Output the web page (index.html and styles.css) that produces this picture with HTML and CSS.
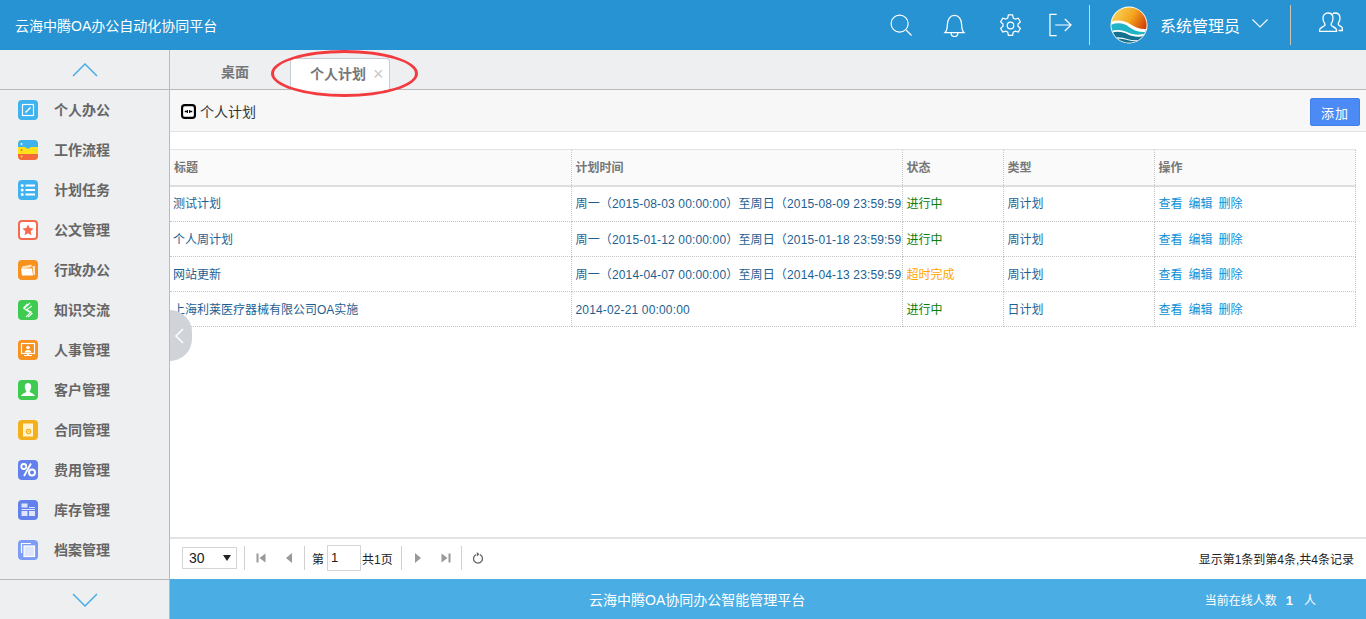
FILE: index.html
```html
<!DOCTYPE html>
<html>
    <head>
        <meta charset="utf-8">
        <link rel="stylesheet" href="styles.css">
    </head>
    <body>
        <header class="top-bar">
            <div class="brand">云海中腾OA办公自动化协同平台</div>
            <div class="top-tools">
                <svg class="tool tool-search" viewBox="0 0 24 24"><circle cx="10.5" cy="10.5" r="9.3"/><path d="M17.5 17.5l6 6"/></svg>
                <svg class="tool tool-bell" viewBox="0 0 24 24"><path d="M2 19.5c2-2 2.5-3.5 2.5-8C4.5 5.500 7.500 1.500 12 1.500s7.500 4 7.500 10c0 4.500.5 6 2.500 8zM8.500 19.500c0 2.500 1.500 4 3.500 4s3.500-1.500 3.500-4"/></svg>
                <svg class="tool tool-gear" viewBox="0 0 24 24"><path d="M9.800 1h4.400l.7 3.300 2 1.100 3.200-1 2.200 3.800-2.500 2.300v2.200l2.500 2.300-2.200 3.800-3.200-1-2 1.100-.7 3.300H9.800l-.7-3.300-2-1.100-3.200 1-2.200-3.800 2.500-2.300v-2.200L1.700 8.200l2.200-3.800 3.200 1 2-1.100z"/><circle cx="12" cy="12" r="3.400"/></svg>
                <svg class="tool tool-exit" viewBox="0 0 24 24"><path d="M8 1H1v22h7M6.500 12h16.500M16.500 5.800L23 12l-6.500 6.200"/></svg>
                <span class="top-divider"></span>
                <svg class="logo" viewBox="0 0 40 40">
                    <defs>
                        <linearGradient id="sun" x1="0" y1="0" x2="1" y2="0.600">
                            <stop offset="0" stop-color="#f9e46e"/>
                            <stop offset="0.550" stop-color="#f4a41d"/>
                            <stop offset="1" stop-color="#cb2c05"/>
                        </linearGradient>
                        <clipPath id="disc"><circle cx="20" cy="20" r="18.500"/></clipPath>
                    </defs>
                    <circle cx="20" cy="20" r="19.500" fill="#fff"/>
                    <g clip-path="url(#disc)">
                        <rect width="40" height="40" fill="url(#sun)"/>
                        <path d="M0 17c8-3 15-2 21 2s12 6 19 5v16H0z" fill="#fff"/>
                        <path d="M0 20c8-3 15-2 20 2s12 6 20 5v13H0z" fill="#1fb4c6"/>
                        <path d="M0 27c7-3 13-2 19 1s14 3 21 0v12H0z" fill="#fff"/>
                        <path d="M0 29c7-3 13-2 19 1s14 3 21 0v10H0z" fill="#14708f"/>
                        <path d="M0 34c7-2 13-1 19 1s14 1 21-1v1c-7 2-14 3-21 1S7 34 0 35z" fill="#fff"/>
                    </g>
                </svg>
                <span class="user-name">系统管理员</span>
                <svg class="user-caret" viewBox="0 0 16 9"><path d="M.5.500L8 8 15.500.500"/></svg>
                <span class="top-divider top-divider-tan"></span>
                <svg class="tool tool-users" viewBox="0 0 24 20"><path d="M.5 19.500V18c0-2 2.500-3 4.500-4 1-.5 1.200-1.500.7-2.500C4.500 10 4 8 4 6.200 4 3 6 1 9 1s5 2 5 5.200c0 1.800-.5 3.800-1.700 5.300-.5 1-.3 2 .7 2.500 2 1 4.500 2 4.500 4v1.500z"/><path d="M13.500 1.800C14.500 1.200 15.300 1 16 1c3 0 5 2 5 5 0 1.800-.5 3.500-1.500 5-.5 1-.3 1.800.7 2.300 1.800.8 3.300 1.700 3.300 3.700v1.500h-4"/></svg>
            </div>
        </header>

        <div class="main">
            <aside class="sidebar">
                <div class="side-arrow side-arrow-up">
                    <svg viewBox="0 0 26 14"><path d="M1 13L13 1l12 12"/></svg>
                </div>
                <nav class="menu">
                    <div class="menu-item">
                        <svg class="menu-icon" viewBox="0 0 20 20"><rect width="20" height="20" rx="4" fill="#3fb2f0"/><rect x="4.500" y="4.500" width="11" height="11" fill="none" stroke="#fff" stroke-width="1.200"/><path d="M7.500 12.500l5-5" stroke="#fff" stroke-width="1.400"/></svg>
                        <span>个人办公</span>
                    </div>
                    <div class="menu-item">
                        <svg class="menu-icon" viewBox="0 0 20 20"><rect width="20" height="20" rx="4" fill="#ffe01a"/><path d="M0 7V4a4 4 0 0 1 4-4h12a4 4 0 0 1 4 4v3h-7l-3 2-3-2z" fill="#3fb2f0"/><path d="M0 14h20v2a4 4 0 0 1-4 4H4a4 4 0 0 1-4-4z" fill="#f5683d"/><circle cx="3.500" cy="4" r="1" fill="#fff"/><circle cx="3.500" cy="10" r="1" fill="#f5683d"/><circle cx="3.500" cy="16.500" r="1" fill="#ffe01a"/></svg>
                        <span>工作流程</span>
                    </div>
                    <div class="menu-item">
                        <svg class="menu-icon" viewBox="0 0 20 20"><rect width="20" height="20" rx="4" fill="#3fb2f0"/><path d="M7.500 5.500H17M7.500 10H17M7.500 14.500H17" stroke="#fff" stroke-width="1.800"/><circle cx="4.200" cy="5.500" r="1.500" fill="#fff"/><circle cx="4.200" cy="10" r="1.500" fill="#fff"/><circle cx="4.200" cy="14.500" r="1.500" fill="#fff"/></svg>
                        <span>计划任务</span>
                    </div>
                    <div class="menu-item">
                        <svg class="menu-icon" viewBox="0 0 20 20"><rect width="20" height="20" rx="4" fill="#f76b4d"/><rect x="2" y="2" width="16" height="16" rx="2" fill="#fff"/><path d="M10 4.500l1.700 3.600 3.900.5-2.900 2.700.8 3.900-3.500-2-3.500 2 .8-3.900-2.900-2.700 3.900-.5z" fill="#f76b4d"/></svg>
                        <span>公文管理</span>
                    </div>
                    <div class="menu-item">
                        <svg class="menu-icon" viewBox="0 0 20 20"><rect width="20" height="20" rx="4" fill="#f8911e"/><path d="M4 9V6.500l9.500-2V7z" fill="#ffe3b5"/><path d="M14.500 6H17v9h-1.500z" fill="#fff" opacity=".8"/><path d="M3 8.500h11l1 7H4z" fill="#fff"/></svg>
                        <span>行政办公</span>
                    </div>
                    <div class="menu-item">
                        <svg class="menu-icon" viewBox="0 0 20 20"><rect width="20" height="20" rx="4" fill="#3fcb51"/><path d="M12 3L6 8.500l7 3.500-5 5M9.500 4L5.500 8M14 6L8 10l6 3.500-4 3.500" fill="none" stroke="#fff" stroke-width="1.200" opacity=".9"/></svg>
                        <span>知识交流</span>
                    </div>
                    <div class="menu-item">
                        <svg class="menu-icon" viewBox="0 0 20 20"><rect width="20" height="20" rx="4" fill="#f8911e"/><rect x="3.500" y="3.500" width="13" height="10" fill="none" stroke="#fff" stroke-width="1.200"/><circle cx="10" cy="7.500" r="1.800" fill="#fff"/><path d="M6.500 12.500c.5-2 2-2.500 3.500-2.500s3 .5 3.500 2.500zM9 13.500h2V15h3v1H6v-1h3z" fill="#fff"/></svg>
                        <span>人事管理</span>
                    </div>
                    <div class="menu-item">
                        <svg class="menu-icon" viewBox="0 0 20 20"><rect width="20" height="20" rx="4" fill="#3fcb51"/><path d="M10 3c2 0 3.200 1.500 3.200 3.500S12 11 11.500 11.800c.5 1 4.500 1.700 5.500 4.200H3c1-2.500 5-3.200 5.500-4.200C8 11 6.800 8.500 6.800 6.500S8 3 10 3z" fill="#fff"/></svg>
                        <span>客户管理</span>
                    </div>
                    <div class="menu-item">
                        <svg class="menu-icon" viewBox="0 0 20 20"><rect width="20" height="20" rx="4" fill="#f4b01b"/><rect x="5" y="3.500" width="10" height="13" fill="#fff3d2"/><circle cx="10.500" cy="11.500" r="2.200" fill="none" stroke="#f4b01b" stroke-width="1.200"/><circle cx="10.500" cy="11.500" r=".8" fill="#f4b01b"/></svg>
                        <span>合同管理</span>
                    </div>
                    <div class="menu-item">
                        <svg class="menu-icon" viewBox="0 0 20 20"><rect width="20" height="20" rx="4" fill="#6281ec"/><circle cx="5.800" cy="6.500" r="2.500" fill="none" stroke="#fff" stroke-width="1.800"/><circle cx="14" cy="12.500" r="3" fill="none" stroke="#fff" stroke-width="2"/><path d="M13 3.500L6 16" stroke="#fff" stroke-width="1.800"/></svg>
                        <span>费用管理</span>
                    </div>
                    <div class="menu-item">
                        <svg class="menu-icon" viewBox="0 0 20 20"><rect width="20" height="20" rx="4" fill="#6281ec"/><rect x="3.500" y="3.500" width="6" height="4" fill="#dfe6fc"/><path d="M11 7.500h6" stroke="#dfe6fc"/><path d="M3.500 9.500H17" stroke="#dfe6fc"/><rect x="3.500" y="11" width="6" height="5" fill="#dfe6fc"/><rect x="11" y="11" width="6" height="5" fill="#dfe6fc"/></svg>
                        <span>库存管理</span>
                    </div>
                    <div class="menu-item">
                        <svg class="menu-icon" viewBox="0 0 20 20"><rect width="20" height="20" rx="4" fill="#7d9cf5"/><path d="M3.500 13V3.500H13" fill="none" stroke="#fff" stroke-width="1.200"/><rect x="6" y="6" width="10.500" height="10.500" fill="#dfe6fc" stroke="#fff" stroke-width="1.200"/></svg>
                        <span>档案管理</span>
                    </div>
                </nav>
                <div class="side-arrow side-arrow-down">
                    <svg viewBox="0 0 26 14"><path d="M1 1l12 12L25 1"/></svg>
                </div>
            </aside>

            <div class="content">
                <div class="side-toggle">
                    <svg viewBox="0 0 9 16"><path d="M8 1L1 8l7 7"/></svg>
                </div>
                <div class="tabs">
                    <div class="tab">桌面</div>
                    <div class="tab tab-active">个人计划<span class="tab-close">×</span></div>
                </div>
                <div class="red-ring"></div>

                <div class="toolbar">
                    <div class="page-title">
                        <svg class="title-icon" viewBox="0 0 14 14"><rect x="1" y="1" width="12" height="12" rx="2.500" fill="#fff" stroke="#000" stroke-width="2"/><path d="M3.500 7h2.500M8 7h2.500" stroke="#000" stroke-width="1.500"/><path d="M6 5.500v3M8 5.500v3" stroke="#000"/></svg>
                        <span>个人计划</span>
                    </div>
                    <button class="add-button">添加</button>
                </div>

                <div class="table-area">
                    <table class="plan-table">
                        <colgroup>
                            <col class="col-title">
                            <col class="col-time">
                            <col class="col-state">
                            <col class="col-type">
                            <col class="col-actions">
                        </colgroup>
                        <thead>
                            <tr>
                                <th>标题</th>
                                <th>计划时间</th>
                                <th>状态</th>
                                <th>类型</th>
                                <th>操作</th>
                            </tr>
                        </thead>
                        <tbody>
                            <tr>
                                <td>测试计划</td>
                                <td class="plan-time">周一（2015-08-03 00:00:00）至周日（2015-08-09 23:59:59</td>
                                <td class="state-running">进行中</td>
                                <td>周计划</td>
                                <td class="actions"><a href="#">查看</a><a href="#">编辑</a><a href="#">删除</a></td>
                            </tr>
                            <tr>
                                <td>个人周计划</td>
                                <td class="plan-time">周一（2015-01-12 00:00:00）至周日（2015-01-18 23:59:59</td>
                                <td class="state-running">进行中</td>
                                <td>周计划</td>
                                <td class="actions"><a href="#">查看</a><a href="#">编辑</a><a href="#">删除</a></td>
                            </tr>
                            <tr>
                                <td>网站更新</td>
                                <td class="plan-time">周一（2014-04-07 00:00:00）至周日（2014-04-13 23:59:59</td>
                                <td class="state-late">超时完成</td>
                                <td>周计划</td>
                                <td class="actions"><a href="#">查看</a><a href="#">编辑</a><a href="#">删除</a></td>
                            </tr>
                            <tr>
                                <td>上海利莱医疗器械有限公司OA实施</td>
                                <td class="plan-time">2014-02-21 00:00:00</td>
                                <td class="state-running">进行中</td>
                                <td>日计划</td>
                                <td class="actions"><a href="#">查看</a><a href="#">编辑</a><a href="#">删除</a></td>
                            </tr>
                        </tbody>
                    </table>
                </div>

                <div class="pager">
                    <div class="pager-select"><span>30</span><i class="select-caret"></i></div>
                    <span class="pager-sep"></span>
                    <svg class="pager-btn" viewBox="0 0 12 12"><path d="M1.500 1.500h2v9h-2zM10.500 1.500v9L4.500 6z"/></svg>
                    <svg class="pager-btn" viewBox="0 0 12 12"><path d="M9 1v10L3 6z"/></svg>
                    <span class="pager-sep"></span>
                    <span class="pager-text">第</span>
                    <span class="pager-input">1</span>
                    <span class="pager-text pager-total">共1页</span>
                    <span class="pager-sep"></span>
                    <svg class="pager-btn" viewBox="0 0 12 12"><path d="M3 1v10l6-5z"/></svg>
                    <svg class="pager-btn" viewBox="0 0 12 12"><path d="M1.500 1.500v9L7.500 6zM8.500 1.500h2v9h-2z"/></svg>
                    <span class="pager-sep"></span>
                    <svg class="pager-btn pager-refresh" viewBox="0 0 12 12"><path d="M4 2.600a4.500 4.500 0 1 0 4 0"/><path class="refresh-head" d="M4.800 0v4.500L7.500 2.200z"/></svg>
                    <span class="pager-info">显示第1条到第4条,共4条记录</span>
                </div>

                <footer class="footer">
                    <span class="footer-title">云海中腾OA协同办公智能管理平台</span>
                    <span class="footer-online">当前在线人数<b>1</b>人</span>
                </footer>
            </div>
        </div>
    </body>
</html>
```

FILE: styles.css
```css
* {
    margin: 0;
    padding: 0;
    box-sizing: border-box;
    font-family: "Liberation Sans", "Noto Sans CJK SC", sans-serif;
}

html,
body {
    height: 100%;
    overflow: hidden;
}

body {
    display: flex;
    flex-direction: column;
    background: #fff;
    font-size: 12px;
}

/* top bar */
.top-bar {
    display: flex;
    justify-content: space-between;
    align-items: center;
    height: 50px;
    flex-shrink: 0;
    background: #2793d3;
    color: #fff;
}

.brand {
    padding-left: 15px;
    font-size: 14px;
}

.top-tools {
    display: flex;
    align-items: center;
    height: 40px;
    padding-right: 23px;
}

.tool {
    fill: none;
    stroke: #fff;
    stroke-width: 1.300;
    flex-shrink: 0;
}

.tool-search {
    width: 22px;
    height: 22px;
}

.tool-bell {
    width: 23px;
    height: 23px;
    margin-left: 31px;
}

.tool-gear {
    width: 23px;
    height: 23px;
    margin-left: 33px;
}

.tool-exit {
    width: 23px;
    height: 24px;
    margin-left: 27px;
}

.top-divider {
    width: 1px;
    height: 40px;
    margin-left: 17px;
    background: rgba(255, 255, 255, 0.7);
}

.top-divider-tan {
    margin-left: 22px;
    background: #c9c3b8;
}

.logo {
    width: 38px;
    height: 38px;
    margin-left: 20px;
}

.user-name {
    margin-left: 12px;
    font-size: 16px;
}

.user-caret {
    width: 16px;
    height: 9px;
    margin-left: 12px;
    margin-top: -3px;
    fill: none;
    stroke: #fff;
    stroke-width: 1.100;
}

.tool-users {
    width: 24px;
    height: 20px;
    margin-left: 28px;
    margin-top: -6px;
}

/* layout */
.main {
    display: flex;
    flex: 1;
    min-height: 0;
}

.sidebar {
    display: flex;
    flex-direction: column;
    width: 170px;
    flex-shrink: 0;
    background: #eeeff1;
    border-right: 1px solid #b8babd;
}

.side-arrow {
    display: flex;
    justify-content: center;
    align-items: center;
    height: 40px;
    flex-shrink: 0;
}

.side-arrow svg {
    width: 26px;
    height: 14px;
    fill: none;
    stroke: #4aaee5;
    stroke-width: 1.500;
}

.side-arrow-up {
    border-bottom: 1px solid #b8babd;
}

.side-arrow-down {
    border-top: 1px solid #b8babd;
}

.menu {
    flex: 1;
    overflow: hidden;
}

.menu-item {
    display: flex;
    align-items: center;
    height: 40px;
    padding-left: 18px;
    font-size: 14px;
    font-weight: 700;
    line-height: 20px;
    color: #666;
}

.menu-icon {
    width: 20px;
    height: 20px;
    margin-right: 16px;
    flex-shrink: 0;
}

.content {
    position: relative;
    display: flex;
    flex-direction: column;
    flex: 1;
    min-width: 0;
}

.side-toggle {
    position: absolute;
    left: 0;
    top: 260px;
    z-index: 3;
    display: flex;
    align-items: center;
    width: 22px;
    height: 51px;
    padding-left: 5px;
    background: #d0d4d8;
    border-radius: 0 26px 26px 0;
}

.side-toggle svg {
    width: 9px;
    height: 16px;
    fill: none;
    stroke: #fff;
    stroke-width: 1.500;
}

/* tabs */
.tabs {
    display: flex;
    align-items: flex-end;
    height: 40px;
    flex-shrink: 0;
    padding-left: 31px;
    background: #eeeff1;
    border-bottom: 1px solid #b8babd;
}

.tab {
    height: 32px;
    padding: 0 20px;
    line-height: 31px;
    font-size: 14px;
    font-weight: 700;
    color: #777;
}

.tab-active {
    position: relative;
    width: 100px;
    margin-left: 21px;
    margin-bottom: -1px;
    padding: 0 0 0 19px;
    background: #fff;
    border: 1px solid #c6cbd8;
    border-bottom: 0;
    border-radius: 4px 4px 0 0;
}

.tab-close {
    margin-left: 7px;
    font-size: 18px;
    font-weight: 400;
    color: #c8c8c8;
    vertical-align: -1px;
}

.red-ring {
    position: absolute;
    left: 101px;
    top: 0;
    z-index: 2;
    width: 147px;
    height: 47px;
    border: 3px solid #f23a3f;
    border-radius: 50%;
    pointer-events: none;
}

/* toolbar */
.toolbar {
    display: flex;
    justify-content: space-between;
    align-items: center;
    height: 42px;
    flex-shrink: 0;
    padding: 2px 6px 0 11px;
    background: #f7f7f7;
    border-bottom: 1px solid #e2e2e2;
}

.page-title {
    display: flex;
    align-items: center;
    font-size: 14px;
    line-height: 20px;
    color: #333;
}

.title-icon {
    width: 15px;
    height: 15px;
    margin-right: 4px;
}

.add-button {
    width: 50px;
    height: 28px;
    margin-top: 1px;
    font-size: 13px;
    letter-spacing: 1px;
    color: #fff;
    background: #4c8bf5;
    border: 1px solid #4480e6;
    border-radius: 2px;
}

/* table */
.table-area {
    flex: 1;
    min-height: 0;
    padding-top: 17px;
    overflow: hidden;
}

.plan-table {
    width: 1185px;
    table-layout: fixed;
    border-collapse: collapse;
}

.col-title {
    width: 401px;
}

.col-time {
    width: 331px;
}

.col-state {
    width: 101px;
}

.col-type {
    width: 151px;
}

.col-actions {
    width: 201px;
}

.plan-table th,
.plan-table td {
    padding: 0 0 0 4px;
    overflow: hidden;
    white-space: nowrap;
    text-align: left;
    line-height: 16px;
    border-right: 1px dotted #c4c4c4;
}

.plan-table th {
    height: 36px;
    padding-top: 1px;
    font-size: 12px;
    font-weight: 700;
    color: #777;
    background: #fafafa;
    border-top: 1px solid #e2e2e2;
    border-bottom: 2px solid #dedede;
}

.plan-table td {
    height: 35px;
    padding-top: 1px;
    color: #1d5f92;
    border-bottom: 1px dotted #c4c4c4;
}

.plan-table tbody tr:first-child td {
    height: 36px;
    padding-top: 0;
}

.plan-table td:first-child {
    padding-left: 3px;
}

.plan-table .plan-time {
    letter-spacing: 0.15px;
}

.plan-table .state-running {
    color: #0a7d0a;
}

.plan-table .state-late {
    color: #ffa500;
}

.actions a {
    margin-right: 6px;
    color: #0f8fd8;
    text-decoration: none;
}

/* pager */
.pager {
    display: flex;
    align-items: center;
    height: 42px;
    flex-shrink: 0;
    padding: 0 12px 2px;
    border-top: 2px solid #e4e4e4;
    color: #222;
}

.pager-select {
    display: flex;
    justify-content: space-between;
    align-items: center;
    width: 55px;
    height: 22px;
    padding: 0 5px 0 6px;
    font-size: 14px;
    border: 1px solid #d4d4d4;
}

.select-caret {
    border: 4px solid transparent;
    border-top: 6px solid #222;
    border-bottom: 0;
}

.pager-sep {
    width: 1px;
    height: 24px;
    margin: 0 7px;
    flex-shrink: 0;
    background: #d0d0d0;
}

.pager-btn {
    width: 12px;
    height: 12px;
    margin: 0 2px 0 3px;
    fill: #999;
}

.pager-btn + .pager-btn {
    margin-left: 14px;
}

.pager-refresh {
    fill: none;
    stroke: #666;
    stroke-width: 1.300;
}

.refresh-head {
    fill: #666;
    stroke: none;
}

.pager-input {
    width: 34px;
    height: 26px;
    margin: 0 1px 0 3px;
    padding-left: 3px;
    line-height: 24px;
    font-size: 13px;
    color: #222;
    border: 1px solid #d4d4d4;
}

.pager-text {
    font-size: 12px;
}

.pager-total {
    margin-right: 1px;
}

.pager-info {
    margin-left: auto;
    font-size: 12px;
    color: #222;
}

/* footer */
.footer {
    position: relative;
    display: flex;
    align-items: center;
    height: 40px;
    flex-shrink: 0;
    padding-left: 419px;
    background: #4aaee5;
    color: #fff;
}

.footer-title {
    font-size: 14px;
}

.footer-online {
    position: absolute;
    right: 50px;
    font-size: 12px;
}

.footer-online b {
    margin: 0 11px 0 9px;
    font-size: 13px;
}
```
